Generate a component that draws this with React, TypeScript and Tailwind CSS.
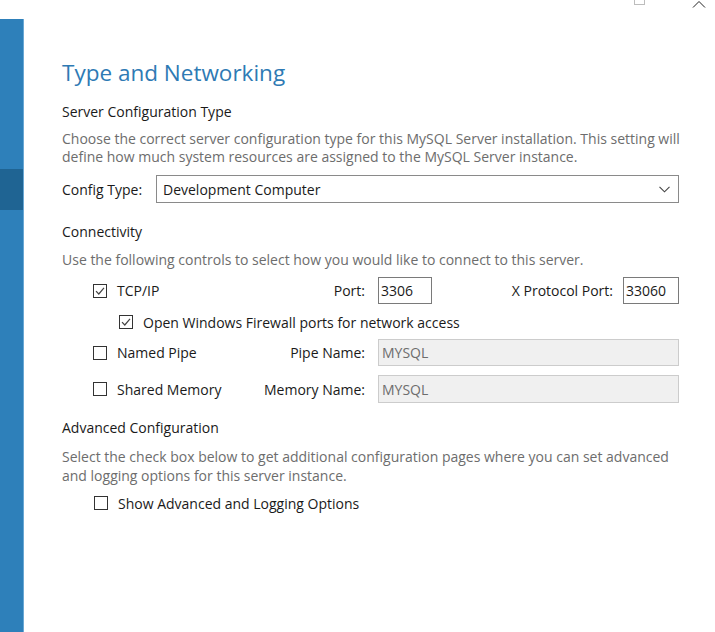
import React from "react";

const font = { fontFamily: '"Open Sans", "Noto Sans", sans-serif' };

function Check({ checked }: { checked?: boolean }) {
  return (
    <svg width="14" height="14" viewBox="0 0 14 14" className="shrink-0">
      <rect x="0.5" y="0.5" width="13" height="13" fill="#fff" stroke="#333" strokeWidth="1" />
      {checked && (
        <path d="M3 7.2 L5.8 10 L11 3.8" fill="none" stroke="#444" strokeWidth="1.2" />
      )}
    </svg>
  );
}

export default function App() {
  return (
    <div className="relative flex h-[632px] w-[715px] overflow-hidden bg-white text-[#1a1a1a]" style={font}>
      {/* window chrome */}
      <div className="absolute left-[634px] top-[-6px] h-[11px] w-[11px] border border-[#bdbdbd]" />
      <svg className="absolute left-[692px] top-0" width="14" height="8" viewBox="0 0 14 8">
        <path d="M1 7.5 L7 1.5 L13 7.5" fill="none" stroke="#222" strokeWidth="1" />
      </svg>

      {/* sidebar */}
      <div className="flex w-[24px] shrink-0 flex-col">
        <div className="h-[19px] bg-white" />
        <div className="flex flex-1 border-r border-[#6aa8d4] bg-[#2e80ba]">
          <div className="mt-[150px] h-[41px] w-full bg-[#1f6493]" />
        </div>
      </div>

      {/* content */}
      <div className="box-content flex w-[617px] flex-col whitespace-nowrap pl-[38px] text-[14px]">
        <div className="mt-[58px] flex h-[30px] items-center text-[22.5px] text-[#2e7ab4]">Type and Networking</div>

        <div className="mt-[13px] flex h-[20px] items-center">Server Configuration Type</div>
        <div className="mt-[9px] h-[36px] leading-[18px] text-[#6d6d6d]">
          Choose the correct server configuration type for this MySQL Server installation. This setting will
          <br />
          define how much system resources are assigned to the MySQL Server instance.
        </div>

        <div className="mt-[9px] flex h-[28px] items-center">
          <span className="w-[94px] shrink-0">Config Type:</span>
          <div className="flex h-[28px] flex-1 items-center justify-between border border-[#8a8a8a] bg-white pl-[6px] pr-[8px]">
            <span>Development Computer</span>
            <svg width="11" height="7" viewBox="0 0 11 7">
              <path d="M0.5 0.8 L5.5 5.8 L10.5 0.8" fill="none" stroke="#444" strokeWidth="1.1" />
            </svg>
          </div>
        </div>

        <div className="mt-[18px] flex h-[20px] items-center">Connectivity</div>
        <div className="mt-[10px] h-[18px] leading-[18px] text-[#6d6d6d]">
          Use the following controls to select how you would like to connect to this server.
        </div>

        {/* TCP/IP row */}
        <div className="mt-[8px] flex h-[27px] items-center pl-[31px]">
          <div className="flex w-[157px] items-center gap-[10px]">
            <Check checked />
            <span>TCP/IP</span>
          </div>
          <span className="w-[115px] text-right">Port:</span>
          <div className="ml-[13px] flex h-[27px] w-[54px] items-center border border-[#7a7a7a] pl-[2px]">3306</div>
          <span className="flex-1 text-right">X Protocol Port:</span>
          <div className="ml-[10px] flex h-[27px] w-[56px] items-center border border-[#7a7a7a] pl-[2px]">33060</div>
        </div>

        <div className="mt-[8px] flex h-[20px] items-center gap-[10px] pl-[57px]">
          <Check checked />
          <span>Open Windows Firewall ports for network access</span>
        </div>

        <div className="mt-[7px] flex h-[27px] items-center pl-[31px]">
          <div className="flex w-[157px] items-center gap-[10px]">
            <Check />
            <span>Named Pipe</span>
          </div>
          <span className="w-[115px] text-right">Pipe Name:</span>
          <div className="ml-[13px] flex h-[27px] flex-1 items-center border border-[#cccccc] bg-[#f0f0f0] pl-[3px] text-[#6d6d6d]">MYSQL</div>
        </div>

        <div className="mt-[9px] flex h-[28px] items-center pl-[31px]">
          <div className="flex w-[157px] items-center gap-[10px]">
            <Check />
            <span>Shared Memory</span>
          </div>
          <span className="w-[115px] text-right">Memory Name:</span>
          <div className="ml-[13px] flex h-[28px] flex-1 items-center border border-[#cccccc] bg-[#f0f0f0] pl-[3px] text-[#6d6d6d]">MYSQL</div>
        </div>

        <div className="mt-[14px] flex h-[20px] items-center">Advanced Configuration</div>
        <div className="mt-[10px] h-[38px] leading-[19px] text-[#6d6d6d]">
          Select the check box below to get additional configuration pages where you can set advanced
          <br />
          and logging options for this server instance.
        </div>
        <div className="mt-[8px] flex h-[20px] items-center gap-[10px] pl-[32px]">
          <Check />
          <span>Show Advanced and Logging Options</span>
        </div>
      </div>
    </div>
  );
}
